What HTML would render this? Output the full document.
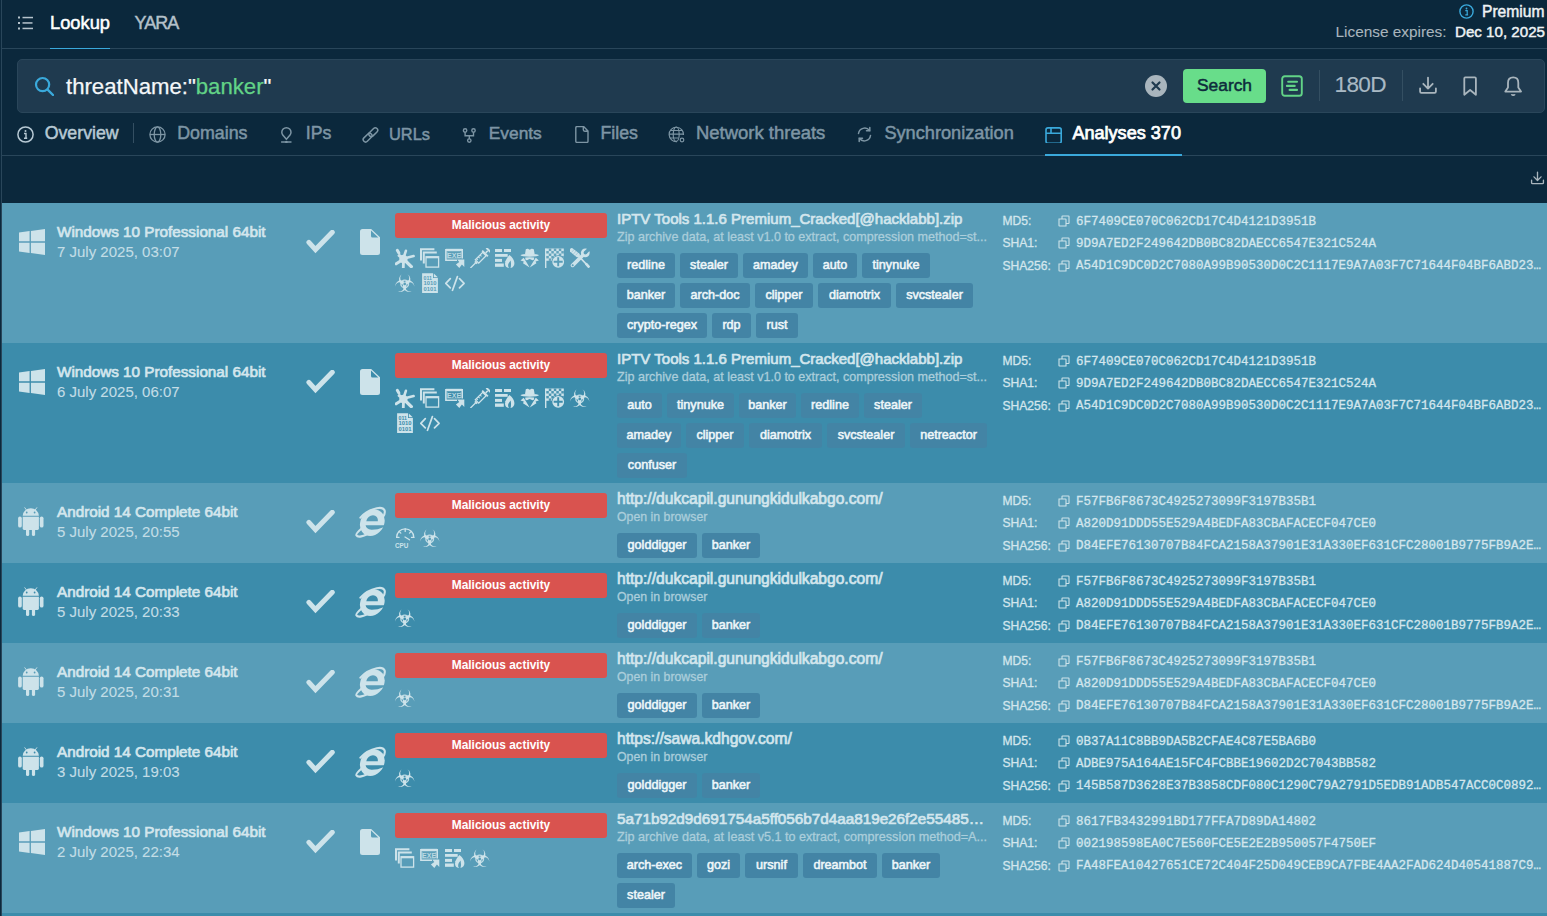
<!DOCTYPE html><html><head><meta charset="utf-8"><style>
html,body{margin:0;padding:0;}
body{width:1547px;height:916px;overflow:hidden;background:#0b283c;position:relative;font-family:'Liberation Sans',sans-serif;}
.t{position:absolute;white-space:pre;}
.i{position:absolute;overflow:visible;--bg:#589db8;}
.b{position:absolute;}
.tag{position:absolute;height:25px;background:#4384a5;border-radius:3px;color:#eef6f9;font:12.6px/25px 'Liberation Sans',sans-serif;-webkit-text-stroke-width:0.55px;text-align:center;white-space:pre;}
.bad{position:absolute;left:395px;width:212px;height:25px;background:#d9534f;border-radius:3px;color:#fff;font:bold 11.9px/25px 'Liberation Sans',sans-serif;text-align:center;}
</style></head><body>
<svg width="0" height="0" style="position:absolute"><defs>
<symbol id="hamb" viewBox="0 0 15 14"><g fill="currentColor"><rect x="0" y="0.5" width="2" height="2"/><rect x="0" y="6" width="2" height="2"/><rect x="0" y="11.5" width="2" height="2"/><rect x="4.5" y="0.8" width="10.5" height="1.5"/><rect x="4.5" y="6.2" width="10" height="1.5"/><rect x="4.5" y="11.7" width="10.5" height="1.5"/></g></symbol>
<symbol id="info" viewBox="0 0 15 15"><circle cx="7.5" cy="7.5" r="6.6" fill="none" stroke="currentColor" stroke-width="1.4"/><circle cx="7.5" cy="4.5" r="0.9" fill="currentColor"/><path d="M6.3 6.6h1.9v4.2M6.3 10.9h2.8" fill="none" stroke="currentColor" stroke-width="1.2"/></symbol>
<symbol id="search" viewBox="0 0 20 20"><circle cx="8.6" cy="8.6" r="6.6" fill="none" stroke="currentColor" stroke-width="2.2"/><path d="M13.6 13.6L19 19" stroke="currentColor" stroke-width="2.4" stroke-linecap="round"/></symbol>
<symbol id="clear" viewBox="0 0 22 22"><circle cx="11" cy="11" r="11" fill="currentColor"/><path d="M7.5 7.5l7 7M14.5 7.5l-7 7" stroke="#1f3a4f" stroke-width="2.2" stroke-linecap="round"/></symbol>
<symbol id="doclist" viewBox="0 0 22 22"><rect x="1.2" y="1.2" width="19.6" height="19.6" rx="2.6" fill="none" stroke="currentColor" stroke-width="1.9"/><path d="M7.2 6.7h8.8M5.9 10.9h7.8M8.6 14.9h7.4" stroke="currentColor" stroke-width="2.1" stroke-linecap="round"/></symbol>
<symbol id="download" viewBox="0 0 20 20"><path d="M2.1 12.3V15.6Q2.1 16.9 3.4 16.9H16.6Q17.9 16.9 17.9 15.6V12.3" fill="none" stroke="currentColor" stroke-width="1.8" stroke-linecap="round"/><path d="M10 1.6V12.6M5.3 7.8L10 12.6L14.7 7.8" fill="none" stroke="currentColor" stroke-width="1.8" stroke-linecap="round" stroke-linejoin="round"/></symbol>
<symbol id="bookmark" viewBox="0 0 16 21"><path d="M3.2 1.4H12.8Q13.9 1.4 13.9 2.5V18.8L8.1 14L2.3 18.8V2.5Q2.3 1.4 3.2 1.4z" fill="none" stroke="currentColor" stroke-width="1.8" stroke-linejoin="round"/></symbol>
<symbol id="bell" viewBox="0 0 18 21"><path d="M4 11.5V6.8Q4 1.3 9.2 1.3Q14.3 1.3 14.3 6.8V11.5L17 15.6H1.3Z" fill="none" stroke="currentColor" stroke-width="1.8" stroke-linejoin="round"/><path d="M7.2 18.3Q9.2 20.6 11.2 18.3" fill="currentColor" stroke="currentColor" stroke-width="1.2"/></symbol>
<symbol id="tinfo" viewBox="0 0 17 17"><circle cx="8.5" cy="8.5" r="7.6" fill="none" stroke="currentColor" stroke-width="1.5"/><circle cx="8.5" cy="5" r="1" fill="currentColor"/><path d="M7 7.5h2v4.5M7 12.2h3.2" fill="none" stroke="currentColor" stroke-width="1.4"/></symbol>
<symbol id="tglobe" viewBox="0 0 17 17"><g fill="none" stroke="currentColor" stroke-width="1.3"><circle cx="8.5" cy="8.5" r="7.6"/><ellipse cx="8.5" cy="8.5" rx="3.3" ry="7.6"/><path d="M1 8.5h15"/></g></symbol>
<symbol id="tpin" viewBox="0 0 17 17"><g fill="none" stroke="currentColor" stroke-width="1.5"><path d="M7.4 13.2L4.2 9.6A4.6 4.6 0 1 1 10.6 9.6z" stroke-linejoin="round"/><path d="M2.1 16h10.4"/></g><circle cx="7.4" cy="16" r="1.3" fill="currentColor"/></symbol>
<symbol id="tlink" viewBox="0 0 17 17"><g fill="none" stroke="currentColor" stroke-width="1.5"><rect x="-5.2" y="-2.4" width="10.4" height="4.8" rx="2.4" transform="translate(11.3 6.2) rotate(-45)"/><rect x="-5.2" y="-2.4" width="10.4" height="4.8" rx="2.4" transform="translate(5.6 11.6) rotate(-45)"/></g></symbol>
<symbol id="tfork" viewBox="0 0 17 17"><g fill="none" stroke="currentColor" stroke-width="1.4"><circle cx="3.1" cy="4.5" r="1.7"/><circle cx="11.5" cy="4.5" r="1.7"/><circle cx="7.3" cy="14.6" r="1.7"/><path d="M3.1 6.2V9.7H11.5V6.2M7.3 9.7V12.9"/></g></symbol>
<symbol id="tfile" viewBox="0 0 17 17"><path d="M3 0.6H9.6L14 5V15.2Q14 16.4 12.8 16.4H3Q1.8 16.4 1.8 15.2V1.8Q1.8 0.6 3 0.6z M9.3 0.8V3.8Q9.3 5.2 10.7 5.2H13.8" fill="none" stroke="currentColor" stroke-width="1.4" stroke-linejoin="round"/></symbol>
<symbol id="tnet" viewBox="0 0 17 17"><g fill="none" stroke="currentColor" stroke-width="1.2"><path d="M15.5 9A7.2 7.2 0 1 0 9 15.6"/><ellipse cx="8.2" cy="8.2" rx="3" ry="7.2"/><path d="M1 8.2h14M2.3 4.5h12M2.3 12h8"/><circle cx="14" cy="14" r="1.8"/></g></symbol>
<symbol id="tsync" viewBox="0 0 17 17"><g fill="none" stroke="currentColor" stroke-width="1.5" stroke-linecap="round"><path d="M2.5 7.5A6.2 6.2 0 0 1 13.5 4.5"/><path d="M14.5 9.5A6.2 6.2 0 0 1 3.5 12.5"/><path d="M13.8 1.5v3.3h-3.3M3.2 15.5v-3.3h3.3"/></g></symbol>
<symbol id="twin" viewBox="0 0 17 17"><g fill="none" stroke="currentColor" stroke-width="1.6"><rect x="1" y="1.9" width="15.2" height="15.3" rx="2"/><path d="M1 7.3h15.2M6 1.9v5.4"/></g></symbol>
<symbol id="oswin" viewBox="0 0 26 26"><g fill="currentColor"><path d="M0 3.6L10.6 2.1V12.3H0z"/><path d="M11.9 1.9L26 0V12.3H11.9z"/><path d="M0 13.7H10.6V23.9L0 22.4z"/><path d="M11.9 13.7H26V26L11.9 24.1z"/></g></symbol>
<symbol id="osand" viewBox="0 0 26 30"><g fill="currentColor"><path d="M4.7 8.8A8.1 7.6 0 0 1 20.9 8.8Z"/><path d="M4.7 9.7H20.9V21.6Q20.9 23 19.5 23H6.1Q4.7 23 4.7 21.6Z"/><rect x="0.1" y="9.5" width="3.7" height="11" rx="1.85"/><rect x="21.8" y="9.5" width="3.7" height="11" rx="1.85"/><rect x="8" y="20" width="3.2" height="9.1" rx="1.6"/><rect x="13.9" y="20" width="3.2" height="9.1" rx="1.6"/></g><path d="M6.6 0.4L8.6 3.2M19 0.4L17 3.2" stroke="currentColor" stroke-width="0.9"/><circle cx="8.7" cy="5.5" r="0.9" style="fill:var(--bg)"/><circle cx="16.6" cy="5.5" r="0.9" style="fill:var(--bg)"/></symbol>
<symbol id="check" viewBox="0 0 29 24"><path d="M2.9 12.4L9.5 19.6L26.3 2.3" fill="none" stroke="currentColor" stroke-width="5" stroke-linecap="round"/></symbol>
<symbol id="file" viewBox="0 0 20 26"><path d="M2.5 0H11.2L20 8.3V23.5Q20 26 17.5 26H2.5Q0 26 0 23.5V2.5Q0 0 2.5 0z M11 1.5V7Q11 8.5 12.5 8.5H18.3z" fill="currentColor" fill-rule="evenodd"/></symbol>
<symbol id="ie" viewBox="0 0 31 32"><g transform="translate(17.3 16.7) skewX(-9) translate(-17.3 -16.7)"><ellipse cx="17.3" cy="16.7" rx="12.2" ry="13.2" fill="currentColor"/><g style="fill:var(--bg)"><path d="M11 15.2A5.8 6 0 0 1 22.6 15.2Z"/><path d="M11 19.3H30V21.4L28.4 21.5Q24 23.8 17.5 23.7Q12.2 23.3 11 19.3Z"/></g></g><path d="M5.4 11.6Q12 4.2 21.8 2.2Q28 1 29.5 4.2Q30.6 7.2 28 11" fill="none" stroke="currentColor" stroke-width="2.1" stroke-linecap="round"/><path d="M6.6 22.5Q0.6 27.6 1.4 29.3Q2.4 31.2 6.2 30.4Q8.6 29.9 11 28.8" fill="none" stroke="currentColor" stroke-width="2.1" stroke-linecap="round"/></symbol>
<symbol id="copy" viewBox="0 0 12 12"><g fill="none" stroke="currentColor" stroke-width="1.1"><path d="M1 4h6.5q.5 0 .5.5V11H1.5q-.5 0-.5-.5z"/><path d="M4 4V1.5q0-.5.5-.5h6q.5 0 .5.5v6.5q0 .5-.5.5H8"/></g></symbol>
<symbol id="splat" viewBox="0 0 20 20"><g fill="currentColor" stroke="currentColor" stroke-linecap="round"><circle cx="8.4" cy="11" r="4.2" stroke="none"/><path d="M8.5 10L10.9 2.8" stroke-width="2.6"/><path d="M9 10.5L18.6 8.1" stroke-width="2.6"/><path d="M9 11.5L16.3 18.6" stroke-width="3.4"/><path d="M8.5 11.5L8.3 19.6" stroke-width="2.8"/><path d="M8 11.5L1.2 15.8" stroke-width="3"/><path d="M8 10.5L4.2 7.6" stroke-width="3.2"/><path d="M2.3 2.2L3.9 5" stroke-width="3"/></g></symbol>
<symbol id="wins" viewBox="0 0 20 20"><g fill="none" stroke="currentColor"><path d="M1 12.5V1.2H14.4" stroke-width="2"/><path d="M3.8 15.6V4.4H16.8" stroke-width="2"/><rect x="6" y="8.8" width="12.6" height="10.3" stroke-width="1.3"/><path d="M6 9.3h12.6" stroke-width="2"/></g></symbol>
<symbol id="exe" viewBox="0 0 20 20"><g fill="none" stroke="currentColor"><path d="M12 12.2H0.9V1.9H17.2V10.5" stroke-width="1.6"/><path d="M0.9 1.9H17.2" stroke-width="2.2"/><rect x="2.5" y="3.8" width="13" height="6.6" stroke-width="0.6" opacity="0.5"/></g><text x="9.1" y="10.1" font-family="Liberation Sans" font-weight="bold" font-size="7" text-anchor="middle" fill="currentColor" opacity="0.85">EXE</text><path d="M12.2 11.6H19.3V19L16.9 16.6L14.3 19.9L10.9 16.5L14.3 13.9z" fill="currentColor"/></symbol>
<symbol id="syringe" viewBox="0 0 20 20"><g transform="translate(10 10.5) rotate(-45)" fill="currentColor" stroke="currentColor"><path d="M-13.5 0H-6" stroke-width="1.2"/><rect x="-6.5" y="-1.6" width="1.8" height="3.2" stroke="none"/><rect x="-4.2" y="-2.4" width="10.4" height="4.8" fill="none" stroke-width="1.3"/><path d="M-2.5 -2.4v2M0 -2.4v2M2.5 -2.4v2" stroke-width="1"/><rect x="6.2" y="-4" width="1.8" height="8" stroke="none"/><rect x="8" y="-0.8" width="3" height="1.6" stroke="none"/><rect x="11" y="-3" width="2" height="6" stroke="none"/></g></symbol>
<symbol id="fire" viewBox="0 0 20 20"><g fill="currentColor"><rect x="0" y="1" width="7" height="3"/><rect x="9" y="1" width="7" height="3"/><rect x="0" y="6" width="12.7" height="2.8"/><rect x="0" y="10.9" width="7" height="3"/><rect x="0" y="15.5" width="8.8" height="3.3"/><path d="M14.5 7Q10.5 11 10 15.5Q10 19.5 14 20Q11.6 17 15.6 12.5Q16.5 17 15.5 20Q19.5 19 19.4 15Q19 10.5 14.5 7z"/><path d="M10.8 12.5l-1 1.2 .8 .6z"/></g></symbol>
<symbol id="spy" viewBox="0 0 20 20"><g fill="currentColor"><path d="M5 6.3L5.8 1.2Q7 .5 8 .8L9.7 1.8L11.5 .8Q12.5 .5 13.8 1.2L14.7 6.3z"/><ellipse cx="9.7" cy="7.2" rx="9.2" ry="1.5"/><path d="M5.2 9.6Q9.7 9 14.2 9.6L14 11.6Q12.5 12.8 11 11.4Q9.7 10.8 8.4 11.4Q6.9 12.8 5.4 11.6z"/><path d="M0.5 12.4L3.6 9.8L6.2 13.8L9.6 19.6L3 15.2L3.8 13.6z"/><path d="M18.9 12.4L15.8 9.8L13.2 13.8L9.8 19.6L16.4 15.2L15.6 13.6z"/></g></symbol>
<symbol id="flag" viewBox="0 0 20 20"><path d="M0.7 20V0.6" stroke="currentColor" stroke-width="1.4"/><path d="M0.6 0.6H18.8V10.8H7V12.8H0.6z" fill="currentColor"/><g style="fill:var(--bg)" opacity="0.9"><rect x="3.80" y="0.60" width="2.5" height="2.45"/><rect x="8.80" y="0.60" width="2.5" height="2.45"/><rect x="13.80" y="0.60" width="2.5" height="2.45"/><rect x="1.30" y="3.05" width="2.5" height="2.45"/><rect x="6.30" y="3.05" width="2.5" height="2.45"/><rect x="11.30" y="3.05" width="2.5" height="2.45"/><rect x="16.30" y="3.05" width="2.5" height="2.45"/><rect x="3.80" y="5.50" width="2.5" height="2.45"/><rect x="8.80" y="5.50" width="2.5" height="2.45"/><rect x="13.80" y="5.50" width="2.5" height="2.45"/><rect x="1.30" y="7.95" width="2.5" height="2.45"/><rect x="6.30" y="7.95" width="2.5" height="2.45"/><rect x="11.30" y="7.95" width="2.5" height="2.45"/><rect x="16.30" y="7.95" width="2.5" height="2.45"/><rect x="3.80" y="10.40" width="2.5" height="2.45"/><rect x="8.80" y="10.40" width="2.5" height="2.45"/><rect x="13.80" y="10.40" width="2.5" height="2.45"/></g><circle cx="13.2" cy="13.8" r="6.6" style="fill:var(--bg)"/><circle cx="13.2" cy="13.8" r="5.9" fill="currentColor"/><path d="M13.2 9.3v9M8.7 13.8h9" style="stroke:var(--bg)" stroke-width="1.9"/></symbol>
<symbol id="tools" viewBox="0 0 20 20"><g fill="currentColor" stroke="currentColor" stroke-linecap="round"><path d="M1.8 2.4L7.6 7" stroke-width="4.4"/><path d="M8 7.3L18.5 18.5" stroke-width="1.7"/><path d="M16.4 16.2L18.6 18.6" stroke-width="2.6"/><path d="M2.6 17.3L12.6 7.5" stroke-width="3.8"/><circle cx="15.3" cy="4.8" r="4.4" stroke="none"/></g><path d="M15.3 4.8L20 0.1" style="stroke:var(--bg)" stroke-width="3.4"/><circle cx="15.3" cy="4.8" r="1.7" style="fill:var(--bg)"/><circle cx="2.7" cy="17.2" r="1" style="fill:var(--bg)"/><g style="stroke:var(--bg)" stroke-width="0.5" opacity="0.6"><path d="M1.5 4.5L4.5 1M3.5 6L6.5 2.5M5.5 7.5L8.5 4"/></g></symbol>
<symbol id="bio" viewBox="0 0 20 20"><g fill="currentColor"><path d="M7.10 1.33A5.7 5.7 0 1 0 12.30 1.33A4.5 4.5 0 1 1 7.10 1.33Z"/><path d="M7.10 1.33A5.7 5.7 0 1 0 12.30 1.33A4.5 4.5 0 1 1 7.10 1.33Z" transform="rotate(120 9.7 10.9)"/><path d="M7.10 1.33A5.7 5.7 0 1 0 12.30 1.33A4.5 4.5 0 1 1 7.10 1.33Z" transform="rotate(240 9.7 10.9)"/></g><circle cx="9.7" cy="10.9" r="3.8" fill="none" stroke="currentColor" stroke-width="1.4" opacity="0.9"/><circle cx="9.7" cy="10.9" r="1.3" style="fill:var(--bg)"/></symbol>
<symbol id="binary" viewBox="0 0 20 20"><path d="M2.1 0.2H13V4.9H17.9V20H2.1z" fill="currentColor"/><path d="M13.8 0.4L17.8 4.3H13.8z" fill="currentColor"/><g font-family="Liberation Sans" font-weight="bold" font-size="6.2" style="fill:var(--bg)"><text x="3.6" y="7" textLength="8.4" lengthAdjust="spacingAndGlyphs">011</text><text x="3.6" y="12.4" textLength="13" lengthAdjust="spacingAndGlyphs">1010</text><text x="3.6" y="17.8" textLength="13" lengthAdjust="spacingAndGlyphs">0101</text></g></symbol>
<symbol id="code" viewBox="0 0 20 20"><g fill="none" stroke="currentColor" stroke-width="1.7" stroke-linecap="round" stroke-linejoin="round"><path d="M5.3 5.6L0.8 10.3L5.3 14.8M14.5 5.6L19.1 10.3L14.5 14.8M12.4 3.6L7.5 17.3"/></g></symbol>
<symbol id="cpu" viewBox="0 0 20 20"><g fill="none" stroke="currentColor" stroke-width="1.3" stroke-linecap="round"><path d="M1.6 9.4A8.5 8.5 0 0 1 18.8 9.4"/><path d="M1.6 9.4H4M18.8 9.4H16.5M10.2 1v2.4M4.3 3.6l1.5 1.5M16 3.6l-1.5 1.5M10 9l4.5 2.8"/></g><text x="0" y="19.9" font-family="Liberation Sans" font-weight="bold" font-size="7.6" fill="currentColor" textLength="13.4" lengthAdjust="spacingAndGlyphs">CPU</text></symbol>
</defs>
</svg>
<div class="b" style="left:1px;top:0px;width:1px;height:916px;background:#29465a;"></div>
<div class="b" style="left:2px;top:48px;width:1545px;height:1px;background:#29465a;"></div>
<svg class="i" style="left:18px;top:16px;width:15px;height:14px;color:#b6c3cc;"><use href="#hamb"/></svg>
<div class="t" style="left:50px;top:14.12px;font:normal 18.29px/1 'Liberation Sans';color:#ffffff;-webkit-text-stroke-width:0.5px;">Lookup</div>
<div class="b" style="left:50px;top:47.6px;width:60px;height:1.6px;background:#3aa9db;"></div>
<div class="t" style="left:134.5px;top:14.36px;font:normal 18px/1 'Liberation Sans';color:#b4c1ca;-webkit-text-stroke-width:0.45px;letter-spacing:-1px;">YARA</div>
<svg class="i" style="left:1459px;top:4px;width:15px;height:15px;color:#3aa9db;"><use href="#info"/></svg>
<div class="t" style="left:1482px;top:4.08px;font:normal 15.62px/1 'Liberation Sans';color:#eef2f4;-webkit-text-stroke-width:0.45px;">Premium</div>
<div class="t" style="left:1335.5px;top:24.00px;font:normal 15.36px/1 'Liberation Sans';color:#a9b5bd;-webkit-text-stroke-width:0.1px;">License expires:</div>
<div class="t" style="left:1455px;top:24.19px;font:normal 15.13px/1 'Liberation Sans';color:#eef2f4;-webkit-text-stroke-width:0.45px;">Dec 10, 2025</div>
<div class="b" style="left:17px;top:59px;width:1526px;height:52px;background:#1f3a4f;border:1px solid #2a465a;border-radius:5px"></div>
<svg class="i" style="left:34px;top:76px;width:20px;height:20px;color:#3aa9db;"><use href="#search"/></svg>
<div class="t" style="left:66px;top:75.53px;font:normal 22.17px/1 'Liberation Sans';color:#f4f7f9;-webkit-text-stroke-width:0.25px;">threatName:&quot;<span style="color:#62d387">banker</span>&quot;</div>
<svg class="i" style="left:1145px;top:75px;width:22px;height:22px;color:#a9b5bd;"><use href="#clear"/></svg>
<div class="b" style="left:1183px;top:69px;width:83px;height:34px;background:#68dd8a;border-radius:4px"></div>
<div class="t" style="left:1197px;top:76.70px;font:normal 17.36px/1 'Liberation Sans';color:#0e2b3c;-webkit-text-stroke-width:0.5px;">Search</div>
<svg class="i" style="left:1281px;top:75px;width:22px;height:22px;color:#62d387;"><use href="#doclist"/></svg>
<div class="b" style="left:1319px;top:70px;width:1px;height:31px;background:#344f62;"></div>
<div class="t" style="left:1334.5px;top:74.17px;font:normal 22.6px/1 'Liberation Sans';color:#a9b9c4;-webkit-text-stroke-width:0.15px;letter-spacing:-0.65px;">180D</div>
<div class="b" style="left:1402px;top:70px;width:1px;height:31px;background:#344f62;"></div>
<svg class="i" style="left:1418px;top:76px;width:20px;height:20px;color:#a9b5bd;"><use href="#download"/></svg>
<svg class="i" style="left:1462px;top:76px;width:16px;height:21px;color:#a9b5bd;"><use href="#bookmark"/></svg>
<svg class="i" style="left:1504px;top:76px;width:18px;height:21px;color:#a9b5bd;"><use href="#bell"/></svg>
<div class="b" style="left:2px;top:155px;width:1545px;height:1px;background:#29465a;"></div>
<svg class="i" style="left:17px;top:126px;width:17px;height:17px;color:#b7c9d4;"><use href="#tinfo"/></svg>
<div class="t" style="left:44.7px;top:124.57px;font:normal 17.76px/1 'Liberation Sans';color:#b7c9d4;-webkit-text-stroke-width:0.5px;">Overview</div>
<svg class="i" style="left:149px;top:126px;width:17px;height:17px;color:#7d95a4;"><use href="#tglobe"/></svg>
<div class="t" style="left:177.2px;top:124.52px;font:normal 17.82px/1 'Liberation Sans';color:#7d95a4;-webkit-text-stroke-width:0.5px;">Domains</div>
<svg class="i" style="left:279px;top:126px;width:17px;height:17px;color:#7d95a4;"><use href="#tpin"/></svg>
<div class="t" style="left:305.8px;top:124.60px;font:normal 17.72px/1 'Liberation Sans';color:#7d95a4;-webkit-text-stroke-width:0.5px;">IPs</div>
<svg class="i" style="left:362px;top:126px;width:17px;height:17px;color:#7d95a4;"><use href="#tlink"/></svg>
<div class="t" style="left:389px;top:125.72px;font:normal 16.4px/1 'Liberation Sans';color:#7d95a4;-webkit-text-stroke-width:0.5px;">URLs</div>
<svg class="i" style="left:462px;top:126px;width:17px;height:17px;color:#7d95a4;"><use href="#tfork"/></svg>
<div class="t" style="left:488.8px;top:124.92px;font:normal 17.34px/1 'Liberation Sans';color:#7d95a4;-webkit-text-stroke-width:0.5px;">Events</div>
<svg class="i" style="left:574px;top:126px;width:17px;height:17px;color:#7d95a4;"><use href="#tfile"/></svg>
<div class="t" style="left:600.5px;top:124.57px;font:normal 17.76px/1 'Liberation Sans';color:#7d95a4;-webkit-text-stroke-width:0.5px;">Files</div>
<svg class="i" style="left:668px;top:126px;width:17px;height:17px;color:#7d95a4;"><use href="#tnet"/></svg>
<div class="t" style="left:696px;top:123.96px;font:normal 18.48px/1 'Liberation Sans';color:#7d95a4;-webkit-text-stroke-width:0.5px;">Network threats</div>
<svg class="i" style="left:856px;top:126px;width:17px;height:17px;color:#7d95a4;"><use href="#tsync"/></svg>
<div class="t" style="left:884.4px;top:124.19px;font:normal 18.21px/1 'Liberation Sans';color:#7d95a4;-webkit-text-stroke-width:0.5px;">Synchronization</div>
<svg class="i" style="left:1045px;top:126px;width:17px;height:17px;color:#3aa9db;"><use href="#twin"/></svg>
<div class="t" style="left:1072.4px;top:124.29px;font:normal 18.09px/1 'Liberation Sans';color:#ffffff;-webkit-text-stroke-width:0.75px;">Analyses 370</div>
<div class="b" style="left:133px;top:123px;width:1px;height:20px;background:#344f62;"></div>
<div class="b" style="left:1045px;top:154px;width:137px;height:2px;background:#3aa9db;"></div>
<svg class="i" style="left:1530px;top:171px;width:15px;height:15px;color:#a9b5bd;"><use href="#download"/></svg>
<div class="b" style="left:2px;top:203px;width:1545px;height:140px;background:#589db8;"></div>
<svg class="i" style="left:19px;top:229px;width:26px;height:26px;color:#cde3ea;"><use href="#oswin"/></svg>
<div class="t" style="left:57px;top:224.09px;font:normal 15.25px/1 'Liberation Sans';color:#d3e6ed;-webkit-text-stroke-width:0.7px;">Windows 10 Professional 64bit</div>
<div class="t" style="left:57px;top:244.10px;font:normal 15px/1 'Liberation Sans';color:#c3dde6;-webkit-text-stroke-width:0.1px;">7 July 2025, 03:07</div>
<svg class="i" style="left:306px;top:230px;width:29px;height:24px;color:#cde3ea;"><use href="#check"/></svg>
<svg class="i" style="left:360px;top:229px;width:20px;height:26px;color:#cde3ea;"><use href="#file"/></svg>
<div class="bad" style="top:213px">Malicious activity</div>
<svg class="i" style="left:395px;top:248px;width:20px;height:20px;color:#cde3ea;--bg:#589db8;"><use href="#splat"/></svg>
<svg class="i" style="left:420px;top:248px;width:20px;height:20px;color:#cde3ea;--bg:#589db8;"><use href="#wins"/></svg>
<svg class="i" style="left:445px;top:248px;width:20px;height:20px;color:#cde3ea;--bg:#589db8;"><use href="#exe"/></svg>
<svg class="i" style="left:470px;top:248px;width:20px;height:20px;color:#cde3ea;--bg:#589db8;"><use href="#syringe"/></svg>
<svg class="i" style="left:495px;top:248px;width:20px;height:20px;color:#cde3ea;--bg:#589db8;"><use href="#fire"/></svg>
<svg class="i" style="left:520px;top:248px;width:20px;height:20px;color:#cde3ea;--bg:#589db8;"><use href="#spy"/></svg>
<svg class="i" style="left:545px;top:248px;width:20px;height:20px;color:#cde3ea;--bg:#589db8;"><use href="#flag"/></svg>
<svg class="i" style="left:570px;top:248px;width:20px;height:20px;color:#cde3ea;--bg:#589db8;"><use href="#tools"/></svg>
<svg class="i" style="left:395px;top:273px;width:20px;height:20px;color:#cde3ea;--bg:#589db8;"><use href="#bio"/></svg>
<svg class="i" style="left:420px;top:273px;width:20px;height:20px;color:#cde3ea;--bg:#589db8;"><use href="#binary"/></svg>
<svg class="i" style="left:445px;top:273px;width:20px;height:20px;color:#cde3ea;--bg:#589db8;"><use href="#code"/></svg>
<div class="t" style="left:617px;top:211.09px;font:normal 15.02px/1 'Liberation Sans';color:#d3e6ed;-webkit-text-stroke-width:0.7px;">IPTV Tools 1.1.6 Premium_Cracked[@hacklabb].zip</div>
<div class="t" style="left:617px;top:230.78px;font:normal 12.55px/1 'Liberation Sans';color:#abcedb;-webkit-text-stroke-width:0.3px;">Zip archive data, at least v1.0 to extract, compression method=st...</div>
<div class="tag" style="left:617px;top:253px;width:58px">redline</div>
<div class="tag" style="left:680px;top:253px;width:58px">stealer</div>
<div class="tag" style="left:743px;top:253px;width:65px">amadey</div>
<div class="tag" style="left:813px;top:253px;width:44px">auto</div>
<div class="tag" style="left:862px;top:253px;width:68px">tinynuke</div>
<div class="tag" style="left:617px;top:283px;width:58px">banker</div>
<div class="tag" style="left:680px;top:283px;width:70px">arch-doc</div>
<div class="tag" style="left:755px;top:283px;width:58px">clipper</div>
<div class="tag" style="left:818px;top:283px;width:73px">diamotrix</div>
<div class="tag" style="left:896px;top:283px;width:77px">svcstealer</div>
<div class="tag" style="left:617px;top:313px;width:90px">crypto-regex</div>
<div class="tag" style="left:712px;top:313px;width:39px">rdp</div>
<div class="tag" style="left:756px;top:313px;width:42px">rust</div>
<div class="t" style="left:1002.5px;top:215.16px;font:normal 12.1px/1 'Liberation Sans';color:#d3e6ed;-webkit-text-stroke-width:0.3px;">MD5:</div>
<svg class="i" style="left:1058px;top:214.9px;width:12px;height:12px;color:#cde3ea;"><use href="#copy"/></svg>
<div class="t" style="left:1076px;top:215.82px;font:normal 12.5px/1 'Liberation Mono';color:#d3e6ed;-webkit-text-stroke-width:0.3px;">6F7409CE070C062CD17C4D4121D3951B</div>
<div class="t" style="left:1002.5px;top:237.36px;font:normal 12.1px/1 'Liberation Sans';color:#d3e6ed;-webkit-text-stroke-width:0.3px;">SHA1:</div>
<svg class="i" style="left:1058px;top:237.1px;width:12px;height:12px;color:#cde3ea;"><use href="#copy"/></svg>
<div class="t" style="left:1076px;top:238.02px;font:normal 12.5px/1 'Liberation Mono';color:#d3e6ed;-webkit-text-stroke-width:0.3px;">9D9A7ED2F249642DB0BC82DAECC6547E321C524A</div>
<div class="t" style="left:1002.5px;top:259.76px;font:normal 12.1px/1 'Liberation Sans';color:#d3e6ed;-webkit-text-stroke-width:0.3px;">SHA256:</div>
<svg class="i" style="left:1058px;top:259.5px;width:12px;height:12px;color:#cde3ea;"><use href="#copy"/></svg>
<div class="t" style="left:1076px;top:260.42px;font:normal 12.5px/1 'Liberation Mono';color:#d3e6ed;-webkit-text-stroke-width:0.3px;">A54D1C9DC0D2C7080A99B90530D0C2C1117E9A7A03F7C71644F04BF6ABD23…</div>
<div class="b" style="left:2px;top:343px;width:1545px;height:140px;background:#3c8cab;"></div>
<svg class="i" style="left:19px;top:369px;width:26px;height:26px;color:#cde3ea;"><use href="#oswin"/></svg>
<div class="t" style="left:57px;top:364.09px;font:normal 15.25px/1 'Liberation Sans';color:#d3e6ed;-webkit-text-stroke-width:0.7px;">Windows 10 Professional 64bit</div>
<div class="t" style="left:57px;top:384.10px;font:normal 15px/1 'Liberation Sans';color:#c3dde6;-webkit-text-stroke-width:0.1px;">6 July 2025, 06:07</div>
<svg class="i" style="left:306px;top:370px;width:29px;height:24px;color:#cde3ea;"><use href="#check"/></svg>
<svg class="i" style="left:360px;top:369px;width:20px;height:26px;color:#cde3ea;"><use href="#file"/></svg>
<div class="bad" style="top:353px">Malicious activity</div>
<svg class="i" style="left:395px;top:388px;width:20px;height:20px;color:#cde3ea;--bg:#3c8cab;"><use href="#splat"/></svg>
<svg class="i" style="left:420px;top:388px;width:20px;height:20px;color:#cde3ea;--bg:#3c8cab;"><use href="#wins"/></svg>
<svg class="i" style="left:445px;top:388px;width:20px;height:20px;color:#cde3ea;--bg:#3c8cab;"><use href="#exe"/></svg>
<svg class="i" style="left:470px;top:388px;width:20px;height:20px;color:#cde3ea;--bg:#3c8cab;"><use href="#syringe"/></svg>
<svg class="i" style="left:495px;top:388px;width:20px;height:20px;color:#cde3ea;--bg:#3c8cab;"><use href="#fire"/></svg>
<svg class="i" style="left:520px;top:388px;width:20px;height:20px;color:#cde3ea;--bg:#3c8cab;"><use href="#spy"/></svg>
<svg class="i" style="left:545px;top:388px;width:20px;height:20px;color:#cde3ea;--bg:#3c8cab;"><use href="#flag"/></svg>
<svg class="i" style="left:570px;top:388px;width:20px;height:20px;color:#cde3ea;--bg:#3c8cab;"><use href="#bio"/></svg>
<svg class="i" style="left:395px;top:413px;width:20px;height:20px;color:#cde3ea;--bg:#3c8cab;"><use href="#binary"/></svg>
<svg class="i" style="left:420px;top:413px;width:20px;height:20px;color:#cde3ea;--bg:#3c8cab;"><use href="#code"/></svg>
<div class="t" style="left:617px;top:351.09px;font:normal 15.02px/1 'Liberation Sans';color:#d3e6ed;-webkit-text-stroke-width:0.7px;">IPTV Tools 1.1.6 Premium_Cracked[@hacklabb].zip</div>
<div class="t" style="left:617px;top:370.78px;font:normal 12.55px/1 'Liberation Sans';color:#abcedb;-webkit-text-stroke-width:0.3px;">Zip archive data, at least v1.0 to extract, compression method=st...</div>
<div class="tag" style="left:617px;top:393px;width:45px">auto</div>
<div class="tag" style="left:667px;top:393px;width:67px">tinynuke</div>
<div class="tag" style="left:739px;top:393px;width:57px">banker</div>
<div class="tag" style="left:801px;top:393px;width:58px">redline</div>
<div class="tag" style="left:864px;top:393px;width:58px">stealer</div>
<div class="tag" style="left:617px;top:423px;width:64px">amadey</div>
<div class="tag" style="left:686px;top:423px;width:58px">clipper</div>
<div class="tag" style="left:749px;top:423px;width:73px">diamotrix</div>
<div class="tag" style="left:827px;top:423px;width:78px">svcstealer</div>
<div class="tag" style="left:910px;top:423px;width:77px">netreactor</div>
<div class="tag" style="left:617px;top:453px;width:70px">confuser</div>
<div class="t" style="left:1002.5px;top:355.16px;font:normal 12.1px/1 'Liberation Sans';color:#d3e6ed;-webkit-text-stroke-width:0.3px;">MD5:</div>
<svg class="i" style="left:1058px;top:354.9px;width:12px;height:12px;color:#cde3ea;"><use href="#copy"/></svg>
<div class="t" style="left:1076px;top:355.82px;font:normal 12.5px/1 'Liberation Mono';color:#d3e6ed;-webkit-text-stroke-width:0.3px;">6F7409CE070C062CD17C4D4121D3951B</div>
<div class="t" style="left:1002.5px;top:377.36px;font:normal 12.1px/1 'Liberation Sans';color:#d3e6ed;-webkit-text-stroke-width:0.3px;">SHA1:</div>
<svg class="i" style="left:1058px;top:377.1px;width:12px;height:12px;color:#cde3ea;"><use href="#copy"/></svg>
<div class="t" style="left:1076px;top:378.02px;font:normal 12.5px/1 'Liberation Mono';color:#d3e6ed;-webkit-text-stroke-width:0.3px;">9D9A7ED2F249642DB0BC82DAECC6547E321C524A</div>
<div class="t" style="left:1002.5px;top:399.76px;font:normal 12.1px/1 'Liberation Sans';color:#d3e6ed;-webkit-text-stroke-width:0.3px;">SHA256:</div>
<svg class="i" style="left:1058px;top:399.5px;width:12px;height:12px;color:#cde3ea;"><use href="#copy"/></svg>
<div class="t" style="left:1076px;top:400.42px;font:normal 12.5px/1 'Liberation Mono';color:#d3e6ed;-webkit-text-stroke-width:0.3px;">A54D1C9DC0D2C7080A99B90530D0C2C1117E9A7A03F7C71644F04BF6ABD23…</div>
<div class="b" style="left:2px;top:483px;width:1545px;height:80px;background:#589db8;"></div>
<svg class="i" style="left:18px;top:507px;width:26px;height:30px;color:#cde3ea;--bg:#589db8;"><use href="#osand"/></svg>
<div class="t" style="left:57px;top:504.09px;font:normal 15.25px/1 'Liberation Sans';color:#d3e6ed;-webkit-text-stroke-width:0.7px;">Android 14 Complete 64bit</div>
<div class="t" style="left:57px;top:524.10px;font:normal 15px/1 'Liberation Sans';color:#c3dde6;-webkit-text-stroke-width:0.1px;">5 July 2025, 20:55</div>
<svg class="i" style="left:306px;top:510px;width:29px;height:24px;color:#cde3ea;"><use href="#check"/></svg>
<svg class="i" style="left:355px;top:506px;width:31px;height:32px;color:#cde3ea;--bg:#589db8;"><use href="#ie"/></svg>
<div class="bad" style="top:493px">Malicious activity</div>
<svg class="i" style="left:395px;top:528px;width:20px;height:20px;color:#cde3ea;--bg:#589db8;"><use href="#cpu"/></svg>
<svg class="i" style="left:420px;top:528px;width:20px;height:20px;color:#cde3ea;--bg:#589db8;"><use href="#bio"/></svg>
<div class="t" style="left:617px;top:490.58px;font:normal 15.62px/1 'Liberation Sans';color:#d3e6ed;-webkit-text-stroke-width:0.7px;">http://dukcapil.gunungkidulkabgo.com/</div>
<div class="t" style="left:617px;top:510.97px;font:normal 12.32px/1 'Liberation Sans';color:#abcedb;-webkit-text-stroke-width:0.3px;">Open in browser</div>
<div class="tag" style="left:617px;top:533px;width:80px">golddigger</div>
<div class="tag" style="left:702px;top:533px;width:58px">banker</div>
<div class="t" style="left:1002.5px;top:495.16px;font:normal 12.1px/1 'Liberation Sans';color:#d3e6ed;-webkit-text-stroke-width:0.3px;">MD5:</div>
<svg class="i" style="left:1058px;top:494.9px;width:12px;height:12px;color:#cde3ea;"><use href="#copy"/></svg>
<div class="t" style="left:1076px;top:495.82px;font:normal 12.5px/1 'Liberation Mono';color:#d3e6ed;-webkit-text-stroke-width:0.3px;">F57FB6F8673C4925273099F3197B35B1</div>
<div class="t" style="left:1002.5px;top:517.36px;font:normal 12.1px/1 'Liberation Sans';color:#d3e6ed;-webkit-text-stroke-width:0.3px;">SHA1:</div>
<svg class="i" style="left:1058px;top:517.1px;width:12px;height:12px;color:#cde3ea;"><use href="#copy"/></svg>
<div class="t" style="left:1076px;top:518.02px;font:normal 12.5px/1 'Liberation Mono';color:#d3e6ed;-webkit-text-stroke-width:0.3px;">A820D91DDD55E529A4BEDFA83CBAFACECF047CE0</div>
<div class="t" style="left:1002.5px;top:539.76px;font:normal 12.1px/1 'Liberation Sans';color:#d3e6ed;-webkit-text-stroke-width:0.3px;">SHA256:</div>
<svg class="i" style="left:1058px;top:539.5px;width:12px;height:12px;color:#cde3ea;"><use href="#copy"/></svg>
<div class="t" style="left:1076px;top:540.42px;font:normal 12.5px/1 'Liberation Mono';color:#d3e6ed;-webkit-text-stroke-width:0.3px;">D84EFE76130707B84FCA2158A37901E31A330EF631CFC28001B9775FB9A2E…</div>
<div class="b" style="left:2px;top:563px;width:1545px;height:80px;background:#3c8cab;"></div>
<svg class="i" style="left:18px;top:587px;width:26px;height:30px;color:#cde3ea;--bg:#3c8cab;"><use href="#osand"/></svg>
<div class="t" style="left:57px;top:584.09px;font:normal 15.25px/1 'Liberation Sans';color:#d3e6ed;-webkit-text-stroke-width:0.7px;">Android 14 Complete 64bit</div>
<div class="t" style="left:57px;top:604.10px;font:normal 15px/1 'Liberation Sans';color:#c3dde6;-webkit-text-stroke-width:0.1px;">5 July 2025, 20:33</div>
<svg class="i" style="left:306px;top:590px;width:29px;height:24px;color:#cde3ea;"><use href="#check"/></svg>
<svg class="i" style="left:355px;top:586px;width:31px;height:32px;color:#cde3ea;--bg:#3c8cab;"><use href="#ie"/></svg>
<div class="bad" style="top:573px">Malicious activity</div>
<svg class="i" style="left:395px;top:608px;width:20px;height:20px;color:#cde3ea;--bg:#3c8cab;"><use href="#bio"/></svg>
<div class="t" style="left:617px;top:570.58px;font:normal 15.62px/1 'Liberation Sans';color:#d3e6ed;-webkit-text-stroke-width:0.7px;">http://dukcapil.gunungkidulkabgo.com/</div>
<div class="t" style="left:617px;top:590.97px;font:normal 12.32px/1 'Liberation Sans';color:#abcedb;-webkit-text-stroke-width:0.3px;">Open in browser</div>
<div class="tag" style="left:617px;top:613px;width:80px">golddigger</div>
<div class="tag" style="left:702px;top:613px;width:58px">banker</div>
<div class="t" style="left:1002.5px;top:575.16px;font:normal 12.1px/1 'Liberation Sans';color:#d3e6ed;-webkit-text-stroke-width:0.3px;">MD5:</div>
<svg class="i" style="left:1058px;top:574.9px;width:12px;height:12px;color:#cde3ea;"><use href="#copy"/></svg>
<div class="t" style="left:1076px;top:575.82px;font:normal 12.5px/1 'Liberation Mono';color:#d3e6ed;-webkit-text-stroke-width:0.3px;">F57FB6F8673C4925273099F3197B35B1</div>
<div class="t" style="left:1002.5px;top:597.36px;font:normal 12.1px/1 'Liberation Sans';color:#d3e6ed;-webkit-text-stroke-width:0.3px;">SHA1:</div>
<svg class="i" style="left:1058px;top:597.1px;width:12px;height:12px;color:#cde3ea;"><use href="#copy"/></svg>
<div class="t" style="left:1076px;top:598.02px;font:normal 12.5px/1 'Liberation Mono';color:#d3e6ed;-webkit-text-stroke-width:0.3px;">A820D91DDD55E529A4BEDFA83CBAFACECF047CE0</div>
<div class="t" style="left:1002.5px;top:619.76px;font:normal 12.1px/1 'Liberation Sans';color:#d3e6ed;-webkit-text-stroke-width:0.3px;">SHA256:</div>
<svg class="i" style="left:1058px;top:619.5px;width:12px;height:12px;color:#cde3ea;"><use href="#copy"/></svg>
<div class="t" style="left:1076px;top:620.42px;font:normal 12.5px/1 'Liberation Mono';color:#d3e6ed;-webkit-text-stroke-width:0.3px;">D84EFE76130707B84FCA2158A37901E31A330EF631CFC28001B9775FB9A2E…</div>
<div class="b" style="left:2px;top:643px;width:1545px;height:80px;background:#589db8;"></div>
<svg class="i" style="left:18px;top:667px;width:26px;height:30px;color:#cde3ea;--bg:#589db8;"><use href="#osand"/></svg>
<div class="t" style="left:57px;top:664.09px;font:normal 15.25px/1 'Liberation Sans';color:#d3e6ed;-webkit-text-stroke-width:0.7px;">Android 14 Complete 64bit</div>
<div class="t" style="left:57px;top:684.10px;font:normal 15px/1 'Liberation Sans';color:#c3dde6;-webkit-text-stroke-width:0.1px;">5 July 2025, 20:31</div>
<svg class="i" style="left:306px;top:670px;width:29px;height:24px;color:#cde3ea;"><use href="#check"/></svg>
<svg class="i" style="left:355px;top:666px;width:31px;height:32px;color:#cde3ea;--bg:#589db8;"><use href="#ie"/></svg>
<div class="bad" style="top:653px">Malicious activity</div>
<svg class="i" style="left:395px;top:688px;width:20px;height:20px;color:#cde3ea;--bg:#589db8;"><use href="#bio"/></svg>
<div class="t" style="left:617px;top:650.58px;font:normal 15.62px/1 'Liberation Sans';color:#d3e6ed;-webkit-text-stroke-width:0.7px;">http://dukcapil.gunungkidulkabgo.com/</div>
<div class="t" style="left:617px;top:670.97px;font:normal 12.32px/1 'Liberation Sans';color:#abcedb;-webkit-text-stroke-width:0.3px;">Open in browser</div>
<div class="tag" style="left:617px;top:693px;width:80px">golddigger</div>
<div class="tag" style="left:702px;top:693px;width:58px">banker</div>
<div class="t" style="left:1002.5px;top:655.16px;font:normal 12.1px/1 'Liberation Sans';color:#d3e6ed;-webkit-text-stroke-width:0.3px;">MD5:</div>
<svg class="i" style="left:1058px;top:654.9px;width:12px;height:12px;color:#cde3ea;"><use href="#copy"/></svg>
<div class="t" style="left:1076px;top:655.82px;font:normal 12.5px/1 'Liberation Mono';color:#d3e6ed;-webkit-text-stroke-width:0.3px;">F57FB6F8673C4925273099F3197B35B1</div>
<div class="t" style="left:1002.5px;top:677.36px;font:normal 12.1px/1 'Liberation Sans';color:#d3e6ed;-webkit-text-stroke-width:0.3px;">SHA1:</div>
<svg class="i" style="left:1058px;top:677.1px;width:12px;height:12px;color:#cde3ea;"><use href="#copy"/></svg>
<div class="t" style="left:1076px;top:678.02px;font:normal 12.5px/1 'Liberation Mono';color:#d3e6ed;-webkit-text-stroke-width:0.3px;">A820D91DDD55E529A4BEDFA83CBAFACECF047CE0</div>
<div class="t" style="left:1002.5px;top:699.76px;font:normal 12.1px/1 'Liberation Sans';color:#d3e6ed;-webkit-text-stroke-width:0.3px;">SHA256:</div>
<svg class="i" style="left:1058px;top:699.5px;width:12px;height:12px;color:#cde3ea;"><use href="#copy"/></svg>
<div class="t" style="left:1076px;top:700.42px;font:normal 12.5px/1 'Liberation Mono';color:#d3e6ed;-webkit-text-stroke-width:0.3px;">D84EFE76130707B84FCA2158A37901E31A330EF631CFC28001B9775FB9A2E…</div>
<div class="b" style="left:2px;top:723px;width:1545px;height:80px;background:#3c8cab;"></div>
<svg class="i" style="left:18px;top:747px;width:26px;height:30px;color:#cde3ea;--bg:#3c8cab;"><use href="#osand"/></svg>
<div class="t" style="left:57px;top:744.09px;font:normal 15.25px/1 'Liberation Sans';color:#d3e6ed;-webkit-text-stroke-width:0.7px;">Android 14 Complete 64bit</div>
<div class="t" style="left:57px;top:764.10px;font:normal 15px/1 'Liberation Sans';color:#c3dde6;-webkit-text-stroke-width:0.1px;">3 July 2025, 19:03</div>
<svg class="i" style="left:306px;top:750px;width:29px;height:24px;color:#cde3ea;"><use href="#check"/></svg>
<svg class="i" style="left:355px;top:746px;width:31px;height:32px;color:#cde3ea;--bg:#3c8cab;"><use href="#ie"/></svg>
<div class="bad" style="top:733px">Malicious activity</div>
<svg class="i" style="left:395px;top:768px;width:20px;height:20px;color:#cde3ea;--bg:#3c8cab;"><use href="#bio"/></svg>
<div class="t" style="left:617px;top:730.59px;font:normal 15.6px/1 'Liberation Sans';color:#d3e6ed;-webkit-text-stroke-width:0.7px;">https://sawa.kdhgov.com/</div>
<div class="t" style="left:617px;top:750.97px;font:normal 12.32px/1 'Liberation Sans';color:#abcedb;-webkit-text-stroke-width:0.3px;">Open in browser</div>
<div class="tag" style="left:617px;top:773px;width:80px">golddigger</div>
<div class="tag" style="left:702px;top:773px;width:58px">banker</div>
<div class="t" style="left:1002.5px;top:735.16px;font:normal 12.1px/1 'Liberation Sans';color:#d3e6ed;-webkit-text-stroke-width:0.3px;">MD5:</div>
<svg class="i" style="left:1058px;top:734.9px;width:12px;height:12px;color:#cde3ea;"><use href="#copy"/></svg>
<div class="t" style="left:1076px;top:735.82px;font:normal 12.5px/1 'Liberation Mono';color:#d3e6ed;-webkit-text-stroke-width:0.3px;">0B37A11C8BB9DA5B2CFAE4C87E5BA6B0</div>
<div class="t" style="left:1002.5px;top:757.36px;font:normal 12.1px/1 'Liberation Sans';color:#d3e6ed;-webkit-text-stroke-width:0.3px;">SHA1:</div>
<svg class="i" style="left:1058px;top:757.1px;width:12px;height:12px;color:#cde3ea;"><use href="#copy"/></svg>
<div class="t" style="left:1076px;top:758.02px;font:normal 12.5px/1 'Liberation Mono';color:#d3e6ed;-webkit-text-stroke-width:0.3px;">ADBE975A164AE15FC4FCBBE19602D2C7043BB582</div>
<div class="t" style="left:1002.5px;top:779.76px;font:normal 12.1px/1 'Liberation Sans';color:#d3e6ed;-webkit-text-stroke-width:0.3px;">SHA256:</div>
<svg class="i" style="left:1058px;top:779.5px;width:12px;height:12px;color:#cde3ea;"><use href="#copy"/></svg>
<div class="t" style="left:1076px;top:780.42px;font:normal 12.5px/1 'Liberation Mono';color:#d3e6ed;-webkit-text-stroke-width:0.3px;">145B587D3628E37B3858CDF080C1290C79A2791D5EDB91ADB547ACC0C0892…</div>
<div class="b" style="left:2px;top:803px;width:1545px;height:110px;background:#589db8;"></div>
<svg class="i" style="left:19px;top:829px;width:26px;height:26px;color:#cde3ea;"><use href="#oswin"/></svg>
<div class="t" style="left:57px;top:824.09px;font:normal 15.25px/1 'Liberation Sans';color:#d3e6ed;-webkit-text-stroke-width:0.7px;">Windows 10 Professional 64bit</div>
<div class="t" style="left:57px;top:844.10px;font:normal 15px/1 'Liberation Sans';color:#c3dde6;-webkit-text-stroke-width:0.1px;">2 July 2025, 22:34</div>
<svg class="i" style="left:306px;top:830px;width:29px;height:24px;color:#cde3ea;"><use href="#check"/></svg>
<svg class="i" style="left:360px;top:829px;width:20px;height:26px;color:#cde3ea;"><use href="#file"/></svg>
<div class="bad" style="top:813px">Malicious activity</div>
<svg class="i" style="left:395px;top:848px;width:20px;height:20px;color:#cde3ea;--bg:#589db8;"><use href="#wins"/></svg>
<svg class="i" style="left:420px;top:848px;width:20px;height:20px;color:#cde3ea;--bg:#589db8;"><use href="#exe"/></svg>
<svg class="i" style="left:445px;top:848px;width:20px;height:20px;color:#cde3ea;--bg:#589db8;"><use href="#fire"/></svg>
<svg class="i" style="left:470px;top:848px;width:20px;height:20px;color:#cde3ea;--bg:#589db8;"><use href="#bio"/></svg>
<div class="t" style="left:617px;top:810.89px;font:normal 15.25px/1 'Liberation Sans';color:#d3e6ed;-webkit-text-stroke-width:0.7px;">5a71b92d9d691754a5ff056b7d4aa819e26f2e55485…</div>
<div class="t" style="left:617px;top:830.73px;font:normal 12.6px/1 'Liberation Sans';color:#abcedb;-webkit-text-stroke-width:0.3px;">Zip archive data, at least v5.1 to extract, compression method=A...</div>
<div class="tag" style="left:617px;top:853px;width:75px">arch-exec</div>
<div class="tag" style="left:697px;top:853px;width:43px">gozi</div>
<div class="tag" style="left:745px;top:853px;width:53px">ursnif</div>
<div class="tag" style="left:803px;top:853px;width:74px">dreambot</div>
<div class="tag" style="left:882px;top:853px;width:58px">banker</div>
<div class="tag" style="left:617px;top:883px;width:58px">stealer</div>
<div class="t" style="left:1002.5px;top:815.16px;font:normal 12.1px/1 'Liberation Sans';color:#d3e6ed;-webkit-text-stroke-width:0.3px;">MD5:</div>
<svg class="i" style="left:1058px;top:814.9px;width:12px;height:12px;color:#cde3ea;"><use href="#copy"/></svg>
<div class="t" style="left:1076px;top:815.82px;font:normal 12.5px/1 'Liberation Mono';color:#d3e6ed;-webkit-text-stroke-width:0.3px;">8617FB3432991BD177FFA7D89DA14802</div>
<div class="t" style="left:1002.5px;top:837.36px;font:normal 12.1px/1 'Liberation Sans';color:#d3e6ed;-webkit-text-stroke-width:0.3px;">SHA1:</div>
<svg class="i" style="left:1058px;top:837.1px;width:12px;height:12px;color:#cde3ea;"><use href="#copy"/></svg>
<div class="t" style="left:1076px;top:838.02px;font:normal 12.5px/1 'Liberation Mono';color:#d3e6ed;-webkit-text-stroke-width:0.3px;">002198598EA0C7E560FCE5E2E2B950057F4750EF</div>
<div class="t" style="left:1002.5px;top:859.76px;font:normal 12.1px/1 'Liberation Sans';color:#d3e6ed;-webkit-text-stroke-width:0.3px;">SHA256:</div>
<svg class="i" style="left:1058px;top:859.5px;width:12px;height:12px;color:#cde3ea;"><use href="#copy"/></svg>
<div class="t" style="left:1076px;top:860.42px;font:normal 12.5px/1 'Liberation Mono';color:#d3e6ed;-webkit-text-stroke-width:0.3px;">FA48FEA10427651CE72C404F25D049CEB9CA7FBE4AA2FAD624D40541887C9…</div>
<div class="b" style="left:2px;top:913px;width:1545px;height:80px;background:#3c8cab;"></div>
</body></html>
